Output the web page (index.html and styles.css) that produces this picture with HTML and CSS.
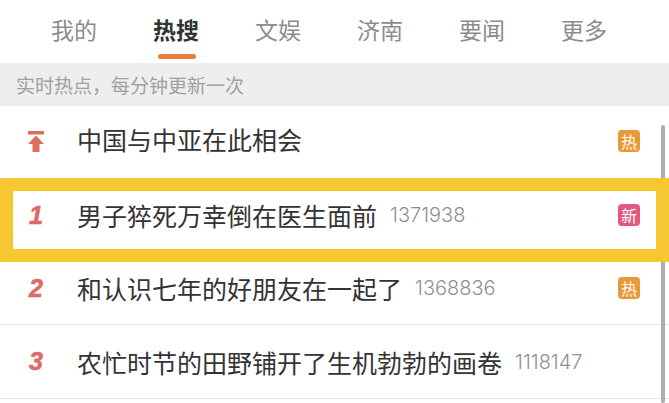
FILE: index.html
```html
<!DOCTYPE html>
<html lang="zh-CN">
<head>
  <meta charset="UTF-8" />
  <title>热搜</title>
  <link rel="stylesheet" href="styles.css">
</head>
<body>
  <div class="tabs">
    <div class="tab">我的</div>
    <div class="tab active">热搜</div>
    <div class="tab">文娱</div>
    <div class="tab">济南</div>
    <div class="tab">要闻</div>
    <div class="tab">更多</div>
  </div>
  <div class="notice">实时热点，每分钟更新一次</div>
  <div class="list">
    <div class="scrollbar"></div>
    <div class="row row-top">
      <div class="rank">
        <svg width="16" height="21" viewBox="0 0 16 21"><path fill="#de6e5a" d="M0 0h16v3.500H0zM8 4.500l8 8.500h-4.500v8h-7v-8H0z"/></svg>
      </div>
      <div class="title">中国与中亚在此相会</div>
      <div class="badge hot">热</div>
    </div>
    <div class="row row-marked">
      <div class="rank">1</div>
      <div class="title">男子猝死万幸倒在医生面前</div>
      <div class="count">1371938</div>
      <div class="badge new">新</div>
    </div>
    <div class="row row-after">
      <div class="rank">2</div>
      <div class="title">和认识七年的好朋友在一起了</div>
      <div class="count">1368836</div>
      <div class="badge hot">热</div>
    </div>
    <div class="row row-last">
      <div class="rank">3</div>
      <div class="title">农忙时节的田野铺开了生机勃勃的画卷</div>
      <div class="count">1118147</div>
    </div>
  </div>
</body>
</html>
```

FILE: styles.css
```css
body {
  margin: 0;
  height: 403px;
  overflow: hidden;
  background: #fff;
  font-family: "Noto Sans CJK SC", "Liberation Sans", sans-serif;
}
.tabs {
  display: flex;
  height: 63px;
  padding-left: 23px;
  box-sizing: border-box;
}
.tab {
  position: relative;
  width: 102px;
  text-align: center;
  font-size: 23px;
  line-height: 58px;
  color: #8c8c8c;
}
.tab.active {
  color: #333;
  font-weight: bold;
}
.tab.active::after {
  content: "";
  position: absolute;
  left: 33px;
  top: 54px;
  width: 38px;
  height: 5px;
  border-radius: 3px;
  background: #e8803a;
}
.notice {
  height: 43px;
  padding-left: 16px;
  background: #eeeeee;
  font-size: 19px;
  line-height: 44px;
  color: #a0a0a0;
}
.list {
  position: relative;
  height: 297px;
  overflow: hidden;
}
.scrollbar {
  position: absolute;
  right: 4px;
  top: 19px;
  width: 4px;
  height: 278px;
  border-radius: 2px;
  background: #adadad;
}
.row {
  display: flex;
  align-items: center;
  box-sizing: border-box;
  padding-right: 29px;
}
.row-top {
  height: 72px;
  padding-bottom: 2px;
}
.row-top .title {
  margin-bottom: 4px;
}
.row-marked {
  position: relative;
  z-index: 1;
  height: 84px;
  border: 13px solid #f6c731;
  padding-right: 16px;
  padding-bottom: 10px;
  background: #fff;
}
.row-marked .rank {
  margin-left: -13px;
}
.row-after {
  height: 63px;
  padding-bottom: 10px;
  border-bottom: 1px solid #e6e6e6;
}
.row-last {
  height: 74px;
  border-bottom: 1px solid #e6e6e6;
}
.rank {
  width: 78px;
  padding-right: 6px;
  box-sizing: border-box;
  flex-shrink: 0;
  display: flex;
  justify-content: center;
  font-family: "Liberation Sans", sans-serif;
  font-size: 25px;
  font-weight: bold;
  font-style: italic;
  color: #de6a68;
  -webkit-text-stroke: 0.6px #de6a68;
}
.title {
  font-size: 25px;
  line-height: 34px;
  color: #333;
  white-space: nowrap;
  margin-left: -1px;
}
.count {
  margin-left: 13px;
  font-family: "Inter", sans-serif;
  font-size: 20px;
  font-weight: 300;
  color: #8f8f8f;
}
.badge {
  width: 22px;
  height: 22px;
  margin-left: auto;
  border-radius: 4px;
  text-align: center;
  font-size: 16px;
  line-height: 22px;
  color: #fff;
}
.badge.hot {
  background: #e89a38;
}
.badge.new {
  background: #e2587f;
}
```
